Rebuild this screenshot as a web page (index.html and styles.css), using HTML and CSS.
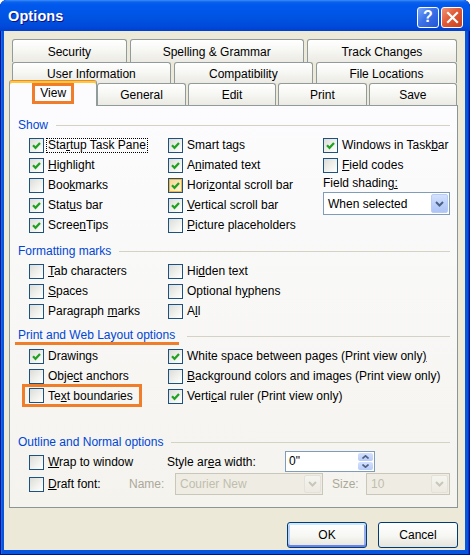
FILE: index.html
```html
<!DOCTYPE html>
<html>
<head>
<meta charset="utf-8">
<title>Options</title>
<link rel="stylesheet" href="styles.css">
</head>
<body>
<div class="win">
  <div class="titlebar">
    <span class="title">Options</span>
    <div class="tbtns">
      <span class="tb help">?</span>
      <span class="tb close"><svg width="13" height="13" viewBox="0 0 13 13"><path d="M2 2 L11 11 M11 2 L2 11" stroke="#fff" stroke-width="2.2" stroke-linecap="square"/></svg></span>
    </div>
  </div>
  <div class="client">
    <div class="tabs">
      <div class="tabrow r1">
        <div class="tab g114">Security</div>
        <div class="tab g174">Spelling &amp; Grammar</div>
        <div class="tab g150">Track Changes</div>
      </div>
      <div class="tabrow r2">
        <div class="tab g159">User Information</div>
        <div class="tab g139">Compatibility</div>
        <div class="tab g141">File Locations</div>
      </div>
      <div class="tabrow r3">
        <div class="tab sel"><span class="hl">View</span></div>
        <div class="tab">General</div>
        <div class="tab">Edit</div>
        <div class="tab">Print</div>
        <div class="tab">Save</div>
      </div>
    </div>

    <div class="panel">
      <div class="gh"><span class="gt">Show</span></div>
      <div class="cols">
        <div class="col c1">
          <div class="cb"><span class="box on"><svg viewBox="0 0 13 13"><path d="M3 6.2 L5.5 8.8 L10 4" /></svg></span><span class="lbl focus">Sta<u>r</u>tup Task Pane</span></div>
          <div class="cb"><span class="box on"><svg viewBox="0 0 13 13"><path d="M3 6.2 L5.5 8.8 L10 4" /></svg></span><span class="lbl"><u>H</u>ighlight</span></div>
          <div class="cb"><span class="box"></span><span class="lbl">Boo<u>k</u>marks</span></div>
          <div class="cb"><span class="box on"><svg viewBox="0 0 13 13"><path d="M3 6.2 L5.5 8.8 L10 4" /></svg></span><span class="lbl">Stat<u>u</u>s bar</span></div>
          <div class="cb"><span class="box on"><svg viewBox="0 0 13 13"><path d="M3 6.2 L5.5 8.8 L10 4" /></svg></span><span class="lbl">Scree<u>n</u>Tips</span></div>
        </div>
        <div class="col c2">
          <div class="cb"><span class="box on"><svg viewBox="0 0 13 13"><path d="M3 6.2 L5.5 8.8 L10 4" /></svg></span><span class="lbl">Smart ta<u>g</u>s</span></div>
          <div class="cb"><span class="box on"><svg viewBox="0 0 13 13"><path d="M3 6.2 L5.5 8.8 L10 4" /></svg></span><span class="lbl">A<u>n</u>imated text</span></div>
          <div class="cb"><span class="box on hot"><svg viewBox="0 0 13 13"><path d="M3 6.2 L5.5 8.8 L10 4" /></svg></span><span class="lbl">Hori<u>z</u>ontal scroll bar</span></div>
          <div class="cb"><span class="box on"><svg viewBox="0 0 13 13"><path d="M3 6.2 L5.5 8.8 L10 4" /></svg></span><span class="lbl"><u>V</u>ertical scroll bar</span></div>
          <div class="cb"><span class="box"></span><span class="lbl"><u>P</u>icture placeholders</span></div>
        </div>
        <div class="col c3">
          <div class="cb"><span class="box on"><svg viewBox="0 0 13 13"><path d="M3 6.2 L5.5 8.8 L10 4" /></svg></span><span class="lbl">Windows in Task<u>b</u>ar</span></div>
          <div class="cb"><span class="box"></span><span class="lbl"><u>F</u>ield codes</span></div>
          <div class="fl">Field shadin<u>g:</u></div>
          <div class="combo">
            <span class="ctext">When selected</span>
            <span class="dd"><svg width="9" height="6" viewBox="0 0 9 6"><path d="M1 1 L4.5 4.5 L8 1" /></svg></span>
          </div>
        </div>
      </div>

      <div class="gh g2"><span class="gt">Formatting marks</span></div>
      <div class="cols">
        <div class="col c1">
          <div class="cb"><span class="box"></span><span class="lbl"><u>T</u>ab characters</span></div>
          <div class="cb"><span class="box"></span><span class="lbl"><u>S</u>paces</span></div>
          <div class="cb"><span class="box"></span><span class="lbl">Paragraph <u>m</u>arks</span></div>
        </div>
        <div class="col c2">
          <div class="cb"><span class="box"></span><span class="lbl">Hi<u>d</u>den text</span></div>
          <div class="cb"><span class="box"></span><span class="lbl">Optional h<u>y</u>phens</span></div>
          <div class="cb"><span class="box"></span><span class="lbl">A<u>l</u>l</span></div>
        </div>
      </div>

      <div class="gh g3"><span class="gt mk">Print and Web Layout options</span></div>
      <div class="cols">
        <div class="col c1">
          <div class="cb"><span class="box on"><svg viewBox="0 0 13 13"><path d="M3 6.2 L5.5 8.8 L10 4" /></svg></span><span class="lbl">Drawings</span></div>
          <div class="cb"><span class="box"></span><span class="lbl">Obje<u>c</u>t anchors</span></div>
          <div class="cb marked"><span class="box"></span><span class="lbl">Te<u>x</u>t boundaries</span></div>
        </div>
        <div class="col c2">
          <div class="cb"><span class="box on"><svg viewBox="0 0 13 13"><path d="M3 6.2 L5.5 8.8 L10 4" /></svg></span><span class="lbl">White space between pages (Print view only<u>)</u></span></div>
          <div class="cb"><span class="box"></span><span class="lbl"><u>B</u>ackground colors and images (Print view only)</span></div>
          <div class="cb"><span class="box on"><svg viewBox="0 0 13 13"><path d="M3 6.2 L5.5 8.8 L10 4" /></svg></span><span class="lbl">Verti<u>c</u>al ruler (Print view only)</span></div>
        </div>
      </div>

      <div class="gh g4"><span class="gt">Outline and Normal options</span></div>
      <div class="orow o1">
        <div class="cb w138"><span class="box"></span><span class="lbl"><u>W</u>rap to window</span></div>
        <span class="olbl w118">Style ar<u>e</u>a width:</span>
        <div class="spin">
          <span class="ctext">0"</span>
          <span class="sbtn">
            <span class="sh"><svg width="7" height="4" viewBox="0 0 7 4"><path d="M0.5 3.5 L3.5 0.8 L6.5 3.5" /></svg></span>
            <span class="sh"><svg width="7" height="4" viewBox="0 0 7 4"><path d="M0.5 0.5 L3.5 3.2 L6.5 0.5" /></svg></span>
          </span>
        </div>
      </div>
      <div class="orow o2">
        <div class="cb w100"><span class="box"></span><span class="lbl"><u>D</u>raft font:</span></div>
        <span class="olbl dis w46">Name:</span>
        <div class="combo off w148">
          <span class="ctext">Courier New</span>
          <span class="dd"><svg width="9" height="6" viewBox="0 0 9 6"><path d="M1 1 L4.5 4.5 L8 1" /></svg></span>
        </div>
        <span class="olbl dis w43">Size:</span>
        <div class="combo off w84">
          <span class="ctext">10</span>
          <span class="dd"><svg width="9" height="6" viewBox="0 0 9 6"><path d="M1 1 L4.5 4.5 L8 1" /></svg></span>
        </div>
      </div>
    </div>

    <div class="btns">
      <div class="btn def">OK</div>
      <div class="btn">Cancel</div>
    </div>
  </div>
</div>
</body>
</html>
```

FILE: styles.css
```css
* { box-sizing: border-box; }
html, body { margin: 0; padding: 0; }
body {
  width: 470px;
  height: 555px;
  overflow: hidden;
  background: #ffffff;
  font-family: "Liberation Sans", Arial, sans-serif;
  font-size: 12px;
  color: #000;
}
u { text-decoration: underline; text-underline-offset: 1px; }

.win {
  width: 470px;
  height: 555px;
  display: flex;
  flex-direction: column;
  background: #0855DD;
  border-radius: 7px 7px 0 0;
  box-shadow: inset 1px 0 #00138C, inset -1px 0 #00138C, inset 0 -1px #00138C, inset 2px 0 #166AEE, inset -2px 0 #0831D9;
}

.titlebar {
  height: 31px;
  flex: none;
  display: flex;
  align-items: center;
  justify-content: space-between;
  padding: 0 7px 0 8px;
  border-radius: 7px 7px 0 0;
  background: linear-gradient(#3D8CF7 0, #0A62EC 2px, #0058EE 5px, #0055E5 14px, #0052E0 60%, #004ADA 85%, #003FCF 100%);
}
.title {
  color: #fff;
  font-weight: bold;
  font-size: 14.5px;
  text-shadow: 1px 1px 0 #0F1089;
  letter-spacing: 0.1px;
}
.tbtns { display: flex; gap: 2px; margin-top: 3px; }
.tb {
  width: 22px;
  height: 21px;
  border: 1px solid #fff;
  border-radius: 3px;
  display: flex;
  align-items: center;
  justify-content: center;
}
.help {
  background: linear-gradient(135deg, #7AA6F7 0%, #3B72E8 45%, #2355D6 100%);
  color: #fff;
  font-weight: bold;
  font-size: 16px;
  line-height: 1;
}
.close {
  background: linear-gradient(135deg, #F09477 0%, #E15A36 45%, #C8401F 100%);
}

.client {
  flex: 1;
  margin: 0 5px 5px 4px;
  background: #ECE9D8;
  padding: 8px 7px 0 5px;
  display: flex;
  flex-direction: column;
}

.tabs { padding: 0 1px 0 3px; }
.tabrow { display: flex; gap: 3px; }
.r1 { height: 23px; }
.r2 { height: 21px; }
.r3 { height: 22px; gap: 2px; align-items: flex-end; }

.tab {
  border: 1px solid #919B9C;
  border-bottom: none;
  border-radius: 3px 3px 0 0;
  background: linear-gradient(#FFFFFF 0%, #F7F7F4 45%, #EBEAE3 100%);
  display: flex;
  align-items: center;
  justify-content: center;
  white-space: nowrap;
  padding-top: 1px;
}
.g114 { flex: 114; }
.g174 { flex: 174; }
.g150 { flex: 150; }
.g159 { flex: 159; }
.g139 { flex: 139; }
.g141 { flex: 141; }
.r3 .tab { flex: 1 1 0; height: 22px; }
.r3 .tab.sel {
  height: 26px;
  margin: 0 -2px -1px -3px;
  background: #FCFCFE;
  border-top: 1px solid #E68B2C;
  box-shadow: inset 0 2px #FFC73C;
  position: relative;
  z-index: 1;
  padding-top: 0;
}
.hl {
  border: 3px solid #F07D2A;
  padding: 0 5px;
  line-height: 15px;
}

.panel {
  height: 403px;
  flex: none;
  border: 1px solid #919B9C;
  border-right-color: #8C9596;
  border-bottom-color: #8C9596;
  background: linear-gradient(#FCFCFE, #F4F3EE);
  padding: 9px 7px 0 8px;
}

.gh {
  display: flex;
  align-items: center;
  height: 20px;
  color: #0046D5;
}
.gh::after {
  content: "";
  flex: 1;
  height: 1px;
  background: #D5D2C3;
  margin-left: 8px;
}
.g2 { margin-top: 6px; }
.g3 { margin-top: 5px; }
.g4 { margin-top: 26px; }
.gt { line-height: 14px; }
.gt.mk {
  border-bottom: 3px solid #F07D2A;
  padding: 0 4px 0 3px;
  margin-left: -3px;
  line-height: 13px;
  margin-top: 2px;
}

.cols { display: flex; padding-left: 11px; }
.col { display: flex; flex-direction: column; }
.c1 { width: 139px; }
.c2 { width: 155px; }
.c3 { flex: 1; }

.cb {
  display: flex;
  align-items: center;
  height: 20px;
  white-space: nowrap;
}
.box {
  width: 15px;
  height: 15px;
  flex: none;
  border: 1px solid #1C5180;
  background: linear-gradient(135deg, #DCDCD7 0%, #F2F2EF 60%, #FFFFFF 100%);
  margin-right: 4px;
  display: flex;
  align-items: center;
  justify-content: center;
}
.box svg { width: 13px; height: 13px; }
.box svg path { fill: none; stroke: #21A121; stroke-width: 2.2; }
.box.hot {
  background: linear-gradient(135deg, #F8D48A 0%, #FCE8BE 60%, #FFFFFF 100%);
  box-shadow: inset 0 0 0 1px #F8B636;
}
.lbl { line-height: 14px; }
.lbl.focus {
  outline: 1px dotted #000;
  padding: 0 1px;
  margin-left: -1px;
  line-height: 13px;
}
.cb.marked {
  height: 23px;
  border: 3px solid #F07D2A;
  margin: -2px 0 -1px -7px;
  padding-left: 4px;
  width: 120px;
}

.fl { height: 16px; line-height: 16px; }
.combo {
  width: 127px;
  height: 23px;
  margin-top: 1px;
  border: 1px solid #7F9DB9;
  background: #fff;
  display: flex;
  align-items: center;
  justify-content: space-between;
  padding: 1px 1px 1px 4px;
}
.dd {
  width: 17px;
  height: 100%;
  border: 1px solid #B9CCF5;
  border-radius: 2px;
  background: linear-gradient(#D4E1FD, #BACEF9 60%, #AEC4F6);
  display: flex;
  align-items: center;
  justify-content: center;
}
.dd svg path { fill: none; stroke: #4D6185; stroke-width: 2; }

.orow { display: flex; align-items: center; padding-left: 11px; }
.o1 { height: 20px; }
.o2 { height: 22px; margin-top: 1px; }
.w138 { width: 138px; flex: none; }
.w100 { width: 100px; flex: none; }
.olbl { white-space: nowrap; flex: none; }
.w118 { width: 118px; }
.w46 { width: 46px; }
.w43 { width: 43px; padding-left: 9px; }
.dis { color: #ACA899; }

.spin {
  width: 90px;
  height: 21px;
  margin-top: -2px;
  border: 1px solid #7F9DB9;
  background: #fff;
  display: flex;
  align-items: center;
  justify-content: space-between;
  padding: 1px 1px 1px 3px;
}
.sbtn {
  width: 15px;
  height: 100%;
  display: flex;
  flex-direction: column;
  gap: 1px;
}
.sh {
  flex: 1;
  border-radius: 2px;
  background: linear-gradient(#D4E1FD, #B6CBF8);
  display: flex;
  align-items: center;
  justify-content: center;
}
.sh svg path { fill: none; stroke: #4D6185; stroke-width: 1.6; }

.combo.off {
  margin-top: 0;
  height: 22px;
  border-color: #C9C7BA;
  background: #EFEDE3;
  color: #C0BDAF;
}
.combo.off .dd {
  border-color: #E3E1D8;
  background: linear-gradient(#F5F4EF, #ECEAE1);
}
.combo.off .dd svg path { stroke: #C9C7BA; }
.w148 { width: 148px; flex: none; }
.w84 { width: 84px; flex: none; }

.btns {
  display: flex;
  justify-content: flex-end;
  gap: 11px;
  margin-top: 14px;
}
.btn {
  width: 80px;
  height: 26px;
  border: 1px solid #003C74;
  border-radius: 3px;
  background: linear-gradient(#FFFFFF 0%, #F6F6F3 55%, #E6E4DB 100%);
  display: flex;
  align-items: center;
  justify-content: center;
}
.btn.def {
  box-shadow: inset 0 2px #CEE7FF, inset 0 -2px #6982EE, inset 2px 0 #B9D1F8, inset -2px 0 #94AEF0;
}
```
